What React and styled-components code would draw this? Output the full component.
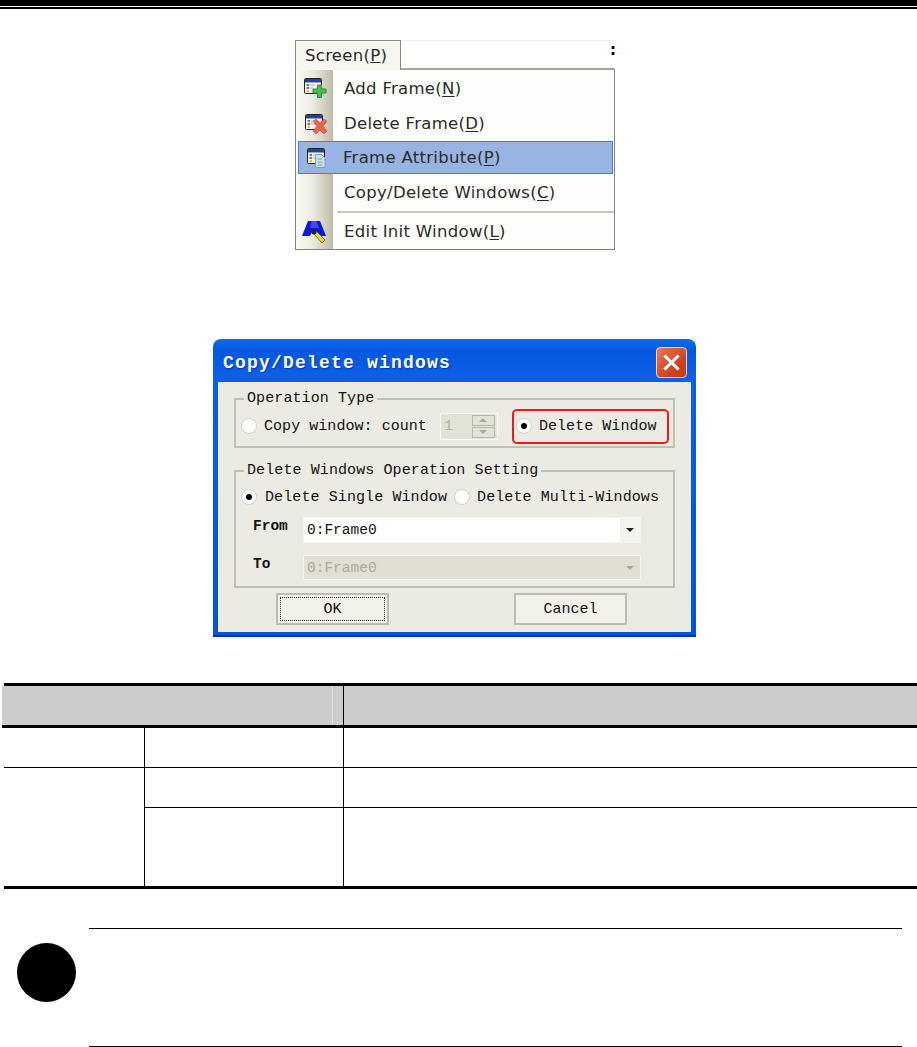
import React from "react";
import styled, { createGlobalStyle } from "styled-components";

const Global = createGlobalStyle`
  html, body { margin: 0; padding: 0; background: #fff; }
  #root { width: 917px; height: 1047px; overflow: hidden; }
`;
const Page = styled.div`
  width: 917px; height: 1047px; display: flex; flex-direction: column; background: #fff;
`;
const HeaderRule = styled.div`
  height: 6px; background: #000; flex: none; margin-bottom: 1px;
`;
const HeaderThin = styled.div`
  height: 2px; background: #000; flex: none; margin-bottom: 31px;
`;
const Menu = styled.div`
  width: 320px; height: 210px; margin-left: 295px; flex: none; box-sizing: border-box;
  display: flex; flex-direction: column; font-family: "DejaVu Sans", sans-serif; font-size: 16.5px; color: #2a2a2a;
`;
const MenuTabRow = styled.div`
  height: 30px; display: flex; flex: none;
`;
const MenuTab = styled.div`
  width: 106px; box-sizing: border-box; border: 1px solid #8a8a82; border-bottom: none; background: #f7f6f1;
  padding: 5px 0 0 9px; line-height: 20px; letter-spacing: 0.3px; white-space: nowrap;
`;
const MenuTabRest = styled.div`
  flex: 1; border-bottom: 2px solid #a7a69c; border-top: 1px solid #eeeeea; position: relative;
  &::after { content: ":"; position: absolute; right: -1px; top: 0; font-size: 15px; color: #000; font-weight: 700; }
`;
const MenuBody = styled.div`
  flex: 1; border: 1px solid #85857c; border-top: none; background: #fdfdfb;
  display: flex; flex-direction: column;
`;
const MenuItem = styled.div`
  height: ${p => p.$h}px; flex: none; display: flex; align-items: center; box-sizing: border-box;
  ${p => p.$active ? "background: #98b4e2; border: 1px solid #4b7fc9; margin: 0 1px 0 2px;" : ""}
`;
const MenuGutter = styled.div`
  width: ${p => p.$active ? 35 : 37}px; align-self: stretch; flex: none; display: flex; align-items: center; justify-content: center;
  ${p => p.$active ? "" : "background: linear-gradient(90deg, #fbfbf8 0%, #ecebe1 45%, #bdbca9 100%);"}
`;
const MenuLabel = styled.span`
  margin-left: ${p => p.$active ? 9 : 11}px; letter-spacing: 0.3px; white-space: nowrap;
  u { text-underline-offset: 2px; }
`;
const MenuSep = styled.div`
  height: 2px; background: #c9c8bd; margin-left: 41px; flex: 1;
`;
const MenuSepRow = styled.div`
  display: flex; flex: none; height: 2px; background: linear-gradient(90deg, #fbfbf8 0, #ecebe1 16px, #bdbca9 37px, transparent 37px);
`;
const Dialog = styled.div`
  width: 483px; height: 298px; margin: 89px 0 0 213px; flex: none; box-sizing: border-box;
  border-radius: 8px 8px 0 0; padding: 0 5px 3px;
  background: linear-gradient(180deg, #0a6bf0 0, #0458dc 12px, #0c5fe6 36px, #0452d8 100%);
  display: flex; flex-direction: column; font-family: "Liberation Mono", monospace; color: #111; border-bottom: 2px solid #0330b8;
`;
const TitleBar = styled.div`
  height: 43px; flex: none; display: flex; align-items: center; justify-content: space-between; padding: 4px 0 0 5px; box-sizing: border-box;
`;
const TitleText = styled.span`
  color: #fff; font-size: 18px; font-weight: 700; letter-spacing: 1.2px; font-family: "Liberation Mono", monospace;
  text-shadow: 1px 1px 1px #02369c;
`;
const CloseButton = styled.div`
  width: 31px; height: 31px; box-sizing: border-box; margin-right: 4px; border: 1px solid #f2d8cc; border-radius: 4px;
  background: linear-gradient(135deg, #e8795a, #c93f1c 70%); display: flex; align-items: center; justify-content: center;
`;
const DialogBody = styled.div`
  flex: 1; background: #ecebe3; display: flex; flex-direction: column; padding: 9px 16px 0 16px;
`;
const Group = styled.fieldset`
  margin: ${p => p.$mt || 0}px 0 0; padding: 0; border: 2px solid #c0bfb2; height: ${p => p.$h}px; box-sizing: border-box; flex: none;
  position: relative; border-radius: 1px; min-width: 0;
`;
const Legend = styled.legend`
  font-size: 15px; padding: 0 3px 0 3px; margin-left: 8px; line-height: 16px; letter-spacing: 0.1px;
`;
const OpRow = styled.div`
  display: flex; align-items: center; height: 36px; font-size: 15px; padding-left: 5px; letter-spacing: 0.05px; margin-top: 1px;
`;
const Radio = styled.span`
  width: 16px; height: 16px; border-radius: 50%; background: #fff; flex: none; box-sizing: border-box;
  border: 1.5px solid #d4d2c6; display: inline-flex; align-items: center; justify-content: center; margin-right: 7px;
  &::after { content: ""; width: 6px; height: 6px; border-radius: 50%; background: ${p => p.$on ? "#000" : "transparent"}; }
`;
const SpinBox = styled.div`
  width: 58px; height: 27px; margin-left: 13px; background: #e3e2d6; border: 1px solid #fbfbf6; box-sizing: border-box;
  display: flex; align-items: center; justify-content: space-between; color: #b3b2a5; padding-left: 3px;
`;
const SpinArrows = styled.div`
  width: 23px; height: 23px; display: flex; flex-direction: column; gap: 1px; margin-right: 2px;
`;
const SpinArrow = styled.div`
  flex: 1; border: 1px solid #b8b7a9; display: flex; align-items: center; justify-content: center;
  &::after { content: ""; border-left: 4px solid transparent; border-right: 4px solid transparent;
    ${p => p.$up ? "border-bottom: 4px solid #a8a79b;" : "border-top: 4px solid #a8a79b;"} }
`;
const Highlight = styled.div`
  display: flex; align-items: center; height: 35px; width: 157px; box-sizing: border-box; margin-left: 14px;
  border: 2px solid #ea1d1d; border-radius: 5px; padding-left: 2px; white-space: nowrap;
`;
const SingleRow = styled.div`
  display: flex; align-items: center; height: 26px; font-size: 15px; padding-left: 5px; margin-top: 5px; letter-spacing: 0.1px; white-space: nowrap;
`;
const SingleRadio = styled(Radio)`
  margin-right: 8px;
`;
const SecondRadio = styled(Radio)`
  margin-left: 7px; margin-right: 7px;
`;
const FieldRow = styled.div`
  display: flex; height: ${p => p.$h}px; margin-top: ${p => p.$mt}px; padding-left: 17px; font-size: 14.5px;
`;
const FieldLabel = styled.span`
  width: 50px; flex: none; margin-top: ${p => p.$off}px; font-weight: 700; line-height: 16px;
`;
const Select = styled.div`
  width: 338px; box-sizing: border-box; display: flex; align-items: center; justify-content: space-between;
  background: ${p => p.$off ? "#e0dfd2" : "#fff"}; color: ${p => p.$off ? "#a9a89c" : "#111"}; padding-left: 3px;
  border: 1px solid #f6f5ef;
`;
const Caret = styled.span`
  width: 20px; align-self: stretch; background: ${p => p.$off ? "transparent" : "#f4f3ed"}; display: flex; align-items: center; justify-content: center;
  &::after { content: ""; border-left: 4px solid transparent; border-right: 4px solid transparent; border-top: 4px solid ${p => p.$off ? "#a9a89c" : "#222"}; }
`;
const ButtonRow = styled.div`
  display: flex; margin-top: 5px; padding-left: 42px; gap: 125px;
`;
const DialogButton = styled.div`
  width: 113px; height: 32px; box-sizing: border-box; border: 2px solid #bdbcae; background: #f2f1ea;
  display: flex; align-items: center; justify-content: center; font-size: 15px; position: relative;
  ${p => p.$focus ? "&::after { content: ''; position: absolute; inset: 2px; border: 1px dotted #333; }" : ""}
`;
const Table = styled.div`
  margin: 46px 0 0 4px; width: 913px; height: 206px; display: grid; flex: none; box-sizing: border-box; position: relative;
  grid-template-columns: 140px 199px 1fr; grid-template-rows: 42px 39px 40px 79px;
  border-top: 3px solid #000; border-bottom: 3px solid #000;
`;
const HeadCell = styled.div`
  grid-column: span ${p => p.$span || 1}; background: #cccccc; border-bottom: 3px solid #000; box-sizing: border-box;
  position: relative; margin-left: ${p => p.$ml || 0}px;
  ${p => p.$divider ? "border-left: 1px solid #000;" : ""}
  ${p => p.$sheen ? `
    &::after { content: ""; position: absolute; right: 10px; top: 0; bottom: 0; width: 1px; background: #e4e4e4; }
  ` : ""}
`;
const Cell = styled.div`
  box-sizing: border-box;
  border-left: ${p => p.$left ? "1px solid #000" : "none"};
  border-top: ${p => p.$top ? "1px solid #000" : "none"};
  grid-row: span ${p => p.$rows || 1};
`;
const Notice = styled.div`
  display: flex; margin-top: 39px; padding-left: 17px; flex: none;
`;
const NoticeDot = styled.div`
  width: 59px; height: 59px; border-radius: 50%; background: #000; flex: none; margin-top: 15px;
`;
const NoticeBody = styled.div`
  width: 813px; height: 119px; margin-left: 13px; box-sizing: border-box; border-top: 1px solid #000; border-bottom: 1px solid #000;
`;

const FrameGlyph = () => (
  <g>
    <rect x="1.500" y="1.500" width="17" height="15" rx="1" fill="#fff" stroke="#222" />
    <rect x="2" y="2" width="16" height="3.500" fill="#26409c" />
    <rect x="3.500" y="7" width="2.500" height="2" fill="#2aa63a" />
    <rect x="3.500" y="10" width="2.500" height="2" fill="#e8403a" />
    <rect x="3.500" y="13" width="2.500" height="2" fill="#e8b93a" />
    <rect x="7" y="7.500" width="5" height="1" fill="#9ab" />
    <rect x="7" y="10.500" width="4" height="1" fill="#9ab" />
  </g>
);
const IconAdd = () => (
  <svg width="24" height="22" viewBox="0 0 24 22">
    <FrameGlyph />
    <path d="M13.500 7.500h4v4h4.500v4h-4.500v4.500h-4v-4.500H9v-4h4.500z" transform="translate(1 0.500)" fill="#4cbb54" stroke="#2b8f3a" />
  </svg>
);
const IconDelete = () => (
  <svg width="24" height="22" viewBox="0 0 24 22">
    <g transform="translate(1 0)"><FrameGlyph /></g>
    <path d="M10 8.500l3-2.500 4 4 4-4 3 2.500-4 4.500 4 5-3 3-4-4-4 4-3-3 4-5z" fill="#e8644a" stroke="#d85a40" strokeWidth="0.8" />
  </svg>
);
const IconAttr = () => (
  <svg width="22" height="22" viewBox="0 0 22 22">
    <FrameGlyph />
    <path d="M9.500 7.500h6l3.500 3.500v9.500H9.500z" fill="#cfe0f4" stroke="#7f9cc8" />
    <path d="M11.500 12h5M11.500 15h5M11.500 18h5" stroke="#7aa66a" />
  </svg>
);
const IconEdit = () => (
  <svg width="25" height="23" viewBox="0 0 25 23">
    <path d="M6 1h12l6 15h-7l-4-6h-2l-3 6H0z" fill="#0a18d8" />
    <path d="M9.500 1h5l2.500 7H8z" fill="#6a6ae8" opacity="0.6" />
    <path d="M11 13l3-2 9 9-3 3z" fill="#e6dc3c" stroke="#7a7420" />
    <circle cx="12" cy="12" r="2.500" fill="#222" />
  </svg>
);
const CloseX = () => (
  <svg width="17" height="17" viewBox="0 0 17 17">
    <path d="M2.500 2.500l12 12M14.500 2.500l-12 12" stroke="#fff" strokeWidth="3" strokeLinecap="square" />
  </svg>
);

export default function App() {
  return (
    <Page>
      <Global />
      <HeaderRule />
      <HeaderThin />
      <Menu>
        <MenuTabRow>
          <MenuTab>Screen(<u>P</u>)</MenuTab>
          <MenuTabRest />
        </MenuTabRow>
        <MenuBody>
          <MenuItem $h={36}><MenuGutter><IconAdd /></MenuGutter><MenuLabel>Add Frame(<u>N</u>)</MenuLabel></MenuItem>
          <MenuItem $h={35}><MenuGutter><IconDelete /></MenuGutter><MenuLabel>Delete Frame(<u>D</u>)</MenuLabel></MenuItem>
          <MenuItem $h={33} $active><MenuGutter $active><IconAttr /></MenuGutter><MenuLabel $active>Frame Attribute(<u>P</u>)</MenuLabel></MenuItem>
          <MenuItem $h={37}><MenuGutter /><MenuLabel>Copy/Delete Windows(<u>C</u>)</MenuLabel></MenuItem>
          <MenuSepRow><MenuSep /></MenuSepRow>
          <MenuItem $h={36}><MenuGutter><IconEdit /></MenuGutter><MenuLabel>Edit Init Window(<u>L</u>)</MenuLabel></MenuItem>
        </MenuBody>
      </Menu>
      <Dialog>
        <TitleBar>
          <TitleText>Copy/Delete windows</TitleText>
          <CloseButton><CloseX /></CloseButton>
        </TitleBar>
        <DialogBody>
          <Group $h={57}>
            <Legend>Operation Type</Legend>
            <OpRow>
              <Radio />
              Copy window: count
              <SpinBox>1<SpinArrows><SpinArrow $up /><SpinArrow /></SpinArrows></SpinBox>
              <Highlight><Radio $on />Delete Window</Highlight>
            </OpRow>
          </Group>
          <Group $h={125} $mt={15}>
            <Legend>Delete Windows Operation Setting</Legend>
            <SingleRow>
              <SingleRadio $on />Delete Single Window<SecondRadio />Delete Multi-Windows
            </SingleRow>
            <FieldRow $mt={7} $h={26}><FieldLabel $off={1}>From</FieldLabel><Select>0:Frame0<Caret /></Select></FieldRow>
            <FieldRow $mt={12} $h={25}><FieldLabel $off={1}>To</FieldLabel><Select $off>0:Frame0<Caret $off /></Select></FieldRow>
          </Group>
          <ButtonRow>
            <DialogButton $focus>OK</DialogButton>
            <DialogButton>Cancel</DialogButton>
          </ButtonRow>
        </DialogBody>
      </Dialog>
      <Table>
        <HeadCell $span={2} $ml={-2} $sheen />
        <HeadCell $divider />
        <Cell />
        <Cell $left />
        <Cell $left />
        <Cell $top $rows={2} />
        <Cell $top $left />
        <Cell $top $left />
        <Cell $top $left />
        <Cell $top $left />
      </Table>
      <Notice>
        <NoticeDot />
        <NoticeBody />
      </Notice>
    </Page>
  );
}
